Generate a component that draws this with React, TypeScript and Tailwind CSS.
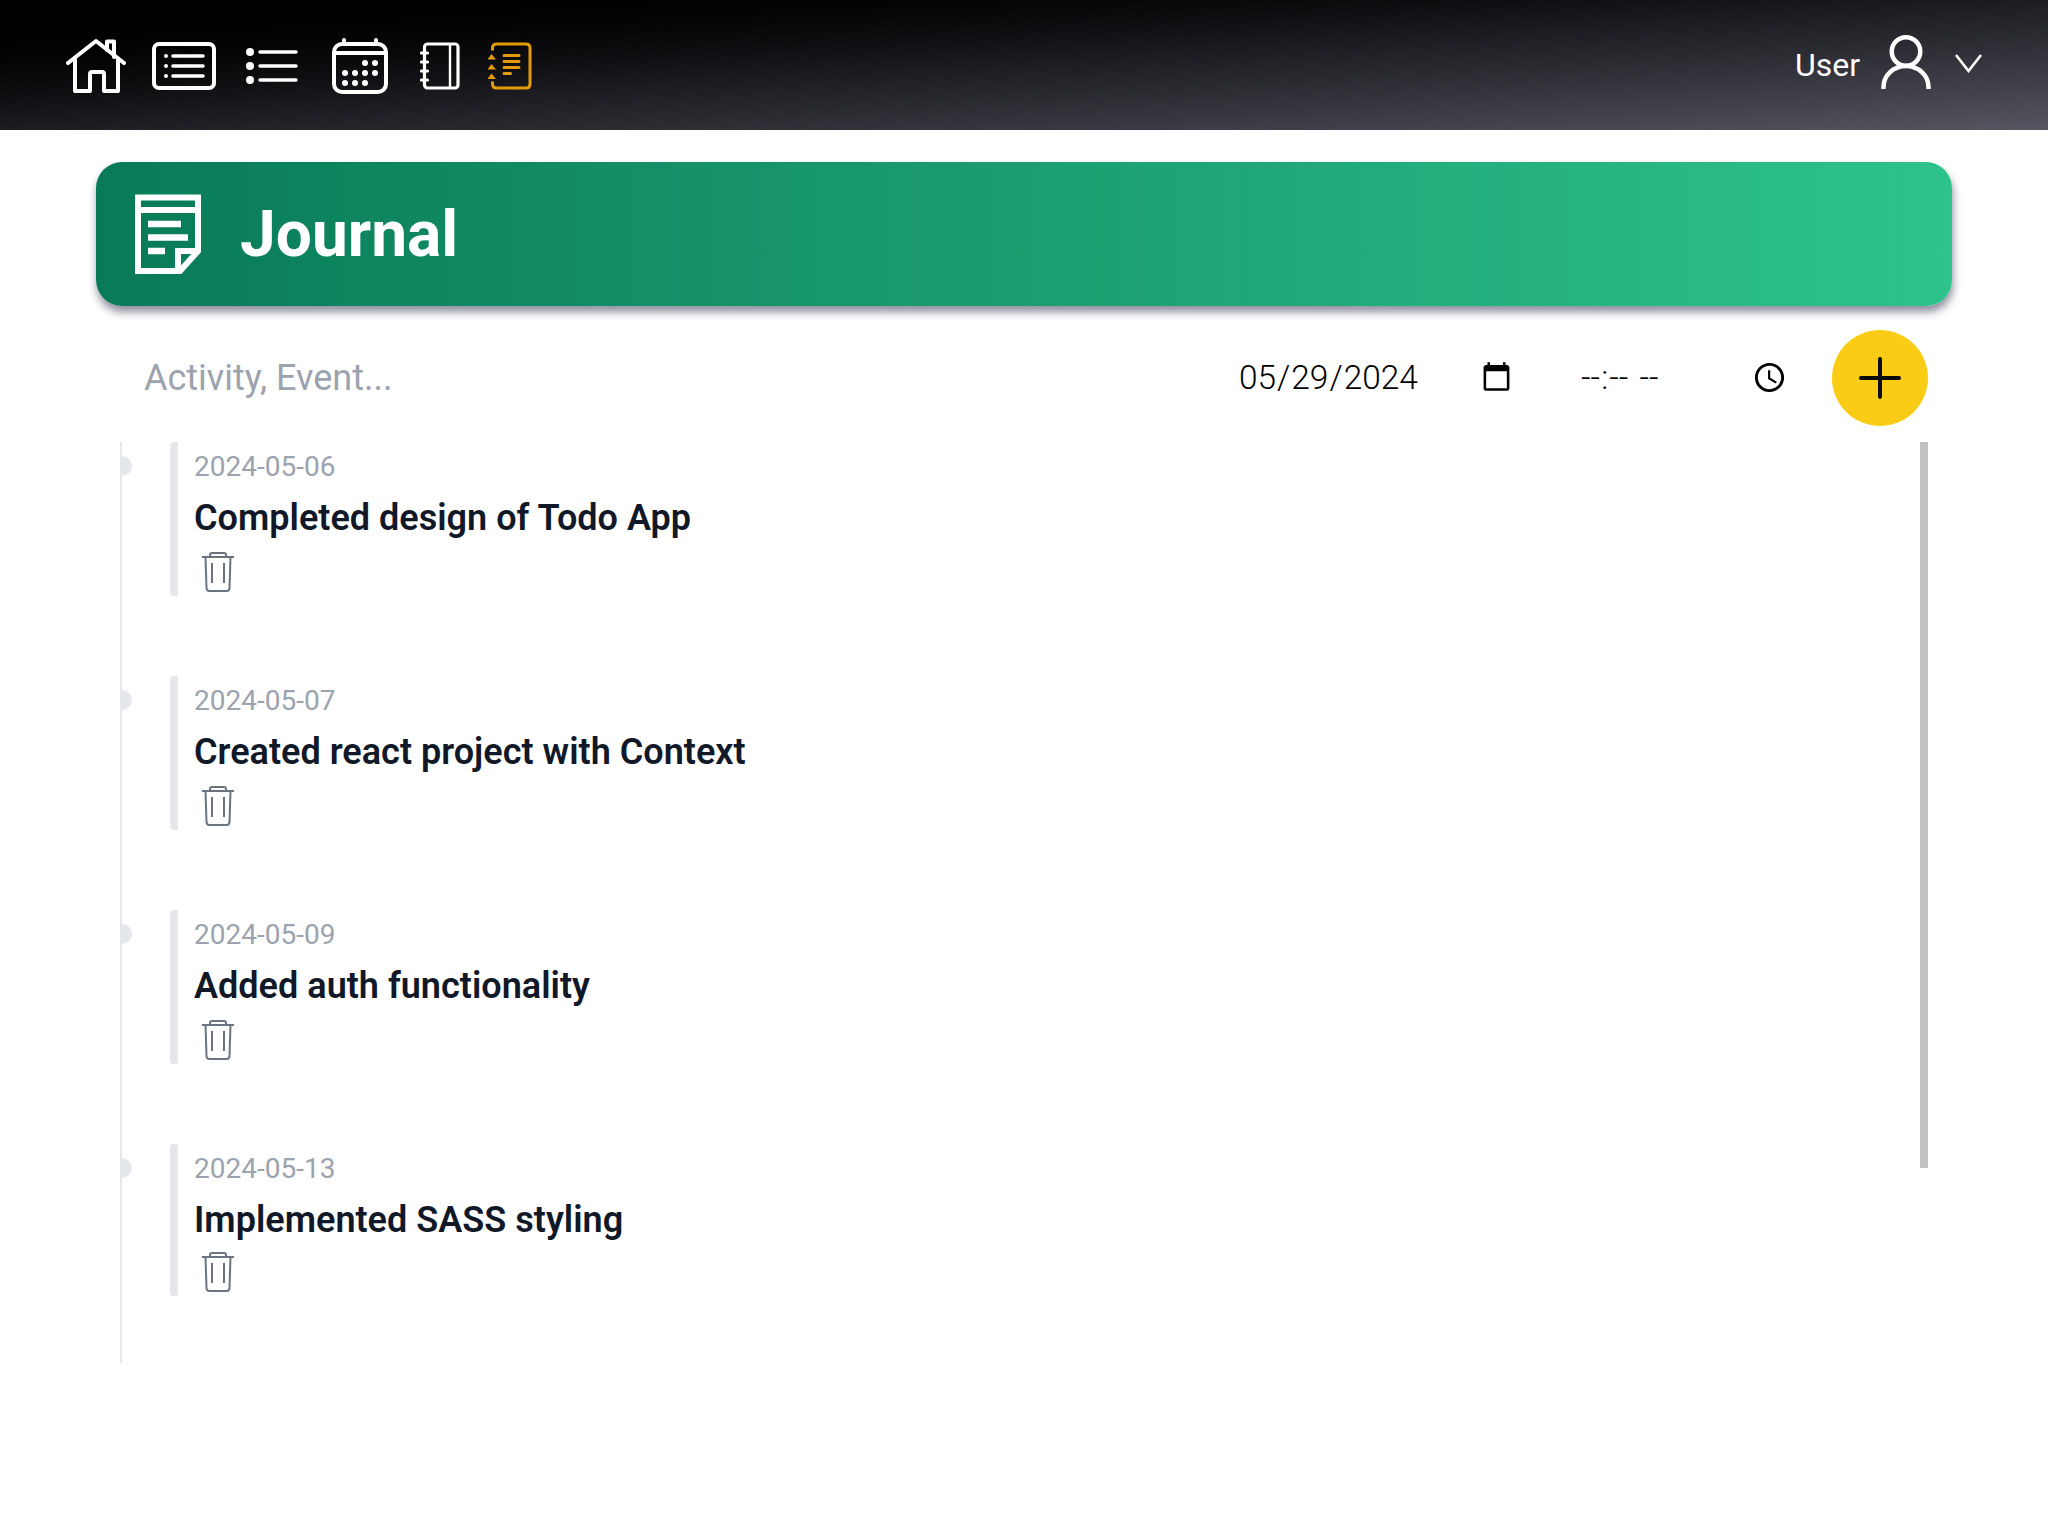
import React from "react";

const NAV = "#ffffff";
const GOLD = "#e39b0d";

function HomeIcon() {
  return (
    <svg width="60" height="56" viewBox="0 0 60 56" fill="none" stroke={NAV} strokeWidth="4" strokeLinejoin="round" strokeLinecap="round">
      <path d="M2 25 L30 3 L58 25" />
      <path d="M41 12 V3.5 H48 V19" />
      <path d="M9 22 V53 H24 V36 Q24 34 26 34 H36 Q38 34 38 36 V53 H52 V22" />
    </svg>
  );
}
function CardListIcon() {
  return (
    <svg width="64" height="48" viewBox="0 0 64 48" fill="none" stroke={NAV} strokeWidth="4" strokeLinecap="round">
      <rect x="2" y="2" width="60" height="44" rx="5" />
      <path d="M21 14 H51 M21 24 H51 M21 34 H51" strokeWidth="3.6" />
      <circle cx="14" cy="14" r="2" fill={NAV} stroke="none" />
      <circle cx="14" cy="24" r="2" fill={NAV} stroke="none" />
      <circle cx="14" cy="34" r="2" fill={NAV} stroke="none" />
    </svg>
  );
}
function ListIcon() {
  return (
    <svg width="52" height="36" viewBox="0 0 52 36" fill="none" stroke={NAV} strokeWidth="3.4" strokeLinecap="round">
      <path d="M14 4 H50 M14 18 H50 M14 32 H50" />
      <circle cx="4" cy="4" r="4" fill={NAV} stroke="none" />
      <circle cx="4" cy="18" r="4" fill={NAV} stroke="none" />
      <circle cx="4" cy="32" r="4" fill={NAV} stroke="none" />
    </svg>
  );
}
function CalendarIcon() {
  const dots = [
    [33, 25], [43, 25],
    [13, 35], [23, 35], [33, 35], [43, 35],
    [13, 45], [23, 45], [33, 45],
  ];
  return (
    <svg width="56" height="56" viewBox="0 0 56 56" fill="none" stroke={NAV} strokeWidth="4" strokeLinecap="round">
      <rect x="2" y="6" width="52" height="48" rx="8" />
      <path d="M2 15 H54" strokeLinecap="butt" />
      <path d="M12 2 V6 M44 2 V6" />
      {dots.map(([x, y]) => (
        <circle key={`${x}-${y}`} cx={x} cy={y} r="3" fill={NAV} stroke="none" />
      ))}
    </svg>
  );
}
function NotebookIcon() {
  return (
    <svg width="40" height="48" viewBox="0 0 40 48" fill="none" stroke={NAV} strokeWidth="3.2" strokeLinecap="round">
      <rect x="4.5" y="2" width="33.5" height="44" rx="3" />
      <path d="M30 3 V45" strokeWidth="2.4" strokeLinecap="butt" />
      <path d="M1.5 11 H7.5 M1.5 20 H7.5 M1.5 29 H7.5 M1.5 38 H7.5" />
    </svg>
  );
}
function JournalTabIcon() {
  return (
    <svg width="44" height="48" viewBox="0 0 44 48" fill="none" stroke={GOLD} strokeWidth="3" strokeLinecap="round">
      <path d="M4.5 8.5 V6 Q4.5 2 8.5 2 H38 Q42 2 42 6 V42 Q42 46 38 46 H8.5 Q4.5 46 4.5 42 V39.5" strokeLinecap="butt" />
      <path d="M-0.5 17.5 L3.5 12 L8 17.5 Z M-0.5 27.5 L3.5 22 L8 27.5 Z M-0.5 37 L3.5 31.5 L8 37 Z" fill={GOLD} stroke="none" />
      <path d="M16 13.5 H31 M16 19.5 H31 M16 25.5 H31 M16 31.5 H22.5" />
    </svg>
  );
}
function UserIcon() {
  return (
    <svg width="50" height="54" viewBox="0 0 50 54" fill="none" stroke={NAV} strokeWidth="4.5">
      <circle cx="25" cy="16.5" r="14.25" />
      <path d="M2.5 54 V52 A22.5 21 0 0 1 47.5 52 V54" />
    </svg>
  );
}
function ChevronIcon() {
  return (
    <svg width="27" height="19" viewBox="0 0 27 19" fill="none" stroke={NAV} strokeWidth="2.6">
      <path d="M1 1 L13.5 17 L26 1" />
    </svg>
  );
}
function JournalIcon() {
  return (
    <svg width="66" height="80" viewBox="0 0 66 80" fill="none" stroke="#ffffff" strokeWidth="6">
      <path d="M3 3.5 H63 V57 L45 77 H3 Z" />
      <path d="M3 16 H63" />
      <path d="M43 77 V57 H63" />
      <path d="M13 30 H46 M13 43.5 H53 M13 57 H30" strokeWidth="6.6" />
    </svg>
  );
}
function TrashIcon() {
  return (
    <svg width="32" height="40" viewBox="0 0 32 40" fill="none" stroke="#6b7280" strokeWidth="2">
      <path d="M0 5 H32" />
      <path d="M8 5 V3 Q8 1 10 1 H22 Q24 1 24 3 V5" />
      <path d="M3.5 5 L4.5 36 Q4.6 39 7.5 39 H24.5 Q27.4 39 27.5 36 L28.5 5" />
      <path d="M10 11 V31 M22 11 V31" />
    </svg>
  );
}
function PlusIcon() {
  return (
    <svg width="42" height="42" viewBox="0 0 42 42" fill="none" stroke="#0a0a0a" strokeWidth="4" strokeLinecap="round">
      <path d="M2 21 H40 M21 2 V40" />
    </svg>
  );
}

const entries = [
  { date: "2024-05-06", title: "Completed design of Todo App" },
  { date: "2024-05-07", title: "Created react project with Context" },
  { date: "2024-05-09", title: "Added auth functionality" },
  { date: "2024-05-13", title: "Implemented SASS styling" },
];

export default function App() {
  return (
    <div className="min-h-[1536px] bg-white [font-family:Roboto,sans-serif]">
      <header className="flex h-[130px] items-center justify-between bg-gradient-to-br from-black to-[#565662] pl-[66px] pr-[66px]">
        <nav className="flex items-center pt-0.5">
          <HomeIcon />
          <span className="ml-[26px] flex"><CardListIcon /></span>
          <span className="ml-[30px] flex"><ListIcon /></span>
          <span className="ml-[34px] flex"><CalendarIcon /></span>
          <span className="ml-[32px] flex"><NotebookIcon /></span>
          <span className="ml-[28px] flex"><JournalTabIcon /></span>
        </nav>
        <div className="flex items-center">
          <span className="text-[32px] leading-none text-white">User</span>
          <span className="mb-1.5 ml-[21px] flex"><UserIcon /></span>
          <span className="mb-[3px] ml-[24px] flex"><ChevronIcon /></span>
        </div>
      </header>

      <main className="mx-24">
        <section className="mt-8 flex h-36 items-center rounded-[26px] bg-gradient-to-r from-[#087a58] to-[#2dc38b] pl-[39px] shadow-[1px_6px_9px_rgba(50,50,80,0.55)]">
          <JournalIcon />
          <h1 className="ml-[39px] mt-0.5 text-[64px] font-bold leading-none text-white">Journal</h1>
        </section>

        <div className="mt-6 flex h-24 items-center pl-[48px] pr-6">
          <input
            type="text"
            placeholder="Activity, Event..."
            className="min-w-0 flex-1 bg-transparent text-4xl text-black outline-none placeholder:text-[#9ca3af]"
          />
          <input
            type="date"
            defaultValue="2024-05-29"
            className="w-[277px] bg-transparent text-[33.4px] font-light text-black outline-none"
          />
          <input
            type="time"
            className="ml-[65px] w-[210px] bg-transparent text-[33.4px] font-light text-black outline-none [&::-webkit-datetime-edit-ampm-field]:ml-[5px]"
          />
          <button className="ml-[42px] flex h-24 w-24 items-center justify-center rounded-full bg-[#facc15]">
            <PlusIcon />
          </button>
        </div>

        <div className="relative mx-6 mt-4 h-[921px]">
          <div className="h-full overflow-hidden">
            <ol className="border-l-2 border-gray-200 pb-[234px]">
              {entries.map((e, i) => {
                const last = i === entries.length - 1;
                return (
                  <li key={e.date} className="relative mb-20">
                    <span className="absolute left-[-10px] top-[14px] h-5 w-5 rounded-full bg-gray-200" />
                    <div className="ml-12 rounded-l border-l-8 border-gray-200 pl-4 pb-1">
                      <div className="h-12 text-[28px] leading-[50px] text-[#9ca3af]">{e.date}</div>
                      <h3 className="h-[54px] text-[36px] font-semibold leading-[56px] tracking-[0.02px] text-[#111827]">{e.title}</h3>
                      <button className={last ? "mt-1.5 flex pl-2" : "mt-2 flex pl-2"}>
                        <TrashIcon />
                      </button>
                    </div>
                  </li>
                );
              })}
            </ol>
          </div>
          <div className="absolute right-0 top-0 h-[726px] w-2 bg-[#c1c1c1]" />
        </div>
      </main>
    </div>
  );
}
